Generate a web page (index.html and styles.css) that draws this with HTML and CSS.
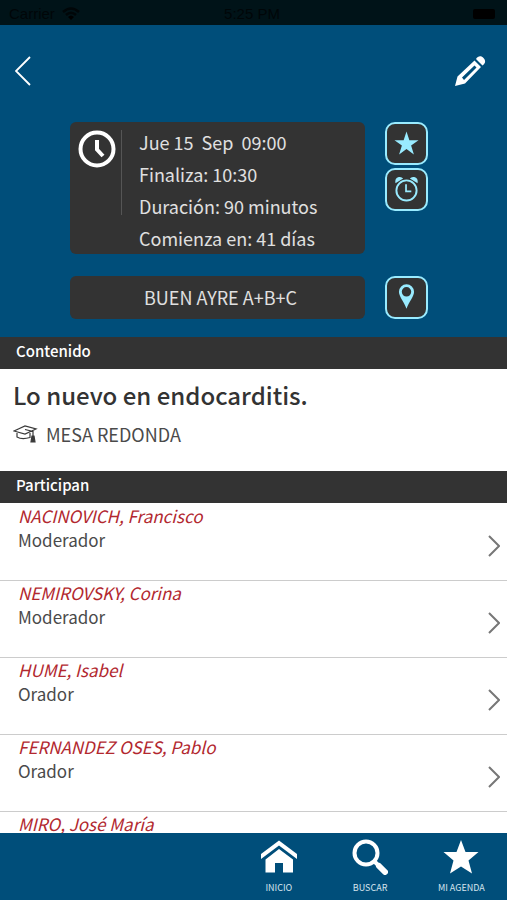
FILE: index.html
```html
<!DOCTYPE html>
<html lang="es">
<head>
  <meta charset="UTF-8" />
  <meta name="viewport" content="width=device-width, initial-scale=1" />
  <title>Lo nuevo en endocarditis.</title>
  <link rel="stylesheet" href="styles.css">
</head>
<body>

  <!-- Status bar -->
  <div class="status-bar">
    <span class="carrier">Carrier
      <svg width="18" height="14" viewBox="0 0 18 14"><path d="M1 5Q9-2 17 5M4 8Q9 3.500 14 8" fill="none" stroke="currentColor" stroke-width="2.500"/><path d="M6 10Q9 7 12 10L9 13Z"/></svg>
    </span>
    <span>5:25 PM</span>
    <span class="battery"></span>
  </div>

  <header class="hero">
    <nav class="toolbar">
      <button class="icon-button" aria-label="Volver">
        <svg width="16" height="30" viewBox="0 0 16 30"><path d="M15 1L1 15L15 29" fill="none" stroke="#fff" stroke-width="1.800"/></svg>
      </button>
      <button class="icon-button" aria-label="Editar nota">
        <svg width="32" height="32" viewBox="0 0 32 32" fill="#fff"><path d="M22 4C24 0.500 27.500 0.500 29.500 3C32 5.500 31.500 8.500 28.500 10.500Z"/><path fill-rule="evenodd" d="M20.500 5.500L27 12L11 28.500L1 31L3.500 21.500ZM20.500 10.500L8 22.500L10 25L22.500 12.500Z"/></svg>
      </button>
    </nav>

    <div class="info">
      <div class="card schedule">
        <svg class="clock" width="38" height="38" viewBox="0 0 38 38" fill="none" stroke="#fff" stroke-width="4"><circle cx="19" cy="19" r="16.500"/><path d="M19 10V19.500L25 26"/></svg>
        <ul class="times">
          <li>Jue 15  Sep  09:00</li>
          <li>Finaliza: 10:30</li>
          <li>Duración: 90 minutos</li>
          <li>Comienza en: 41 días</li>
        </ul>
      </div>
      <div class="actions">
        <button class="action" aria-label="Agregar a mi agenda">
          <svg width="25" height="25" viewBox="0 0 26 26"><path d="M13 0.500L16 9.500H25.500L17.800 15L20.700 24.500L13 18.700L5.300 24.500L8.200 15L0.500 9.500H10Z" fill="#99ebff"/></svg>
        </button>
        <button class="action" aria-label="Alarma">
          <svg width="25" height="29" viewBox="0 0 26 30" fill="none" stroke="#99ebff"><circle cx="13" cy="16" r="10.500" stroke-width="2"/><path d="M12.500 9.500V17H18" stroke-width="1.800"/><path d="M1.500 8.500Q0.500 3 5 2Q8 1.500 9.500 3.500ZM24.500 8.500Q25.500 3 21 2Q18 1.500 16.500 3.500Z" fill="#99ebff" stroke="none"/></svg>
        </button>
      </div>
      <div class="card room">BUEN AYRE A+B+C</div>
      <button class="action" aria-label="Ver ubicación">
        <svg width="17" height="29" viewBox="0 0 18 30"><path fill-rule="evenodd" d="M9 1A8 8 0 0 0 1 9C1 14 6 19 9 27C12 19 17 14 17 9A8 8 0 0 0 9 1ZM9 4A5 5 0 1 1 9 14A5 5 0 1 1 9 4Z" fill="#99ebff"/></svg>
      </button>
    </div>
  </header>

  <main>
    <h2 class="section-title">Contenido</h2>
    <section class="content">
      <h1>Lo nuevo en endocarditis.</h1>
      <p class="kind">
        <svg width="25" height="18" viewBox="0 0 25 18" fill="none" stroke="#3a3a3a" stroke-width="1.200"><path d="M1 6L12 1L23 4L12 9ZM4 8V12Q9 15 17 12.500V8M12 4.500L20 6.500V12"/><path d="M19 11H21L22 17H18Z" fill="#3a3a3a"/></svg>
        MESA REDONDA
      </p>
    </section>

    <h2 class="section-title">Participan</h2>
    <ul class="people">
      <li><a href="#"><span><em>NACINOVICH, Francisco</em>Moderador</span><svg class="chevron" width="12" height="22" viewBox="0 0 12 22"><path d="M1 1L11 11L1 21"/></svg></a></li>
      <li><a href="#"><span><em>NEMIROVSKY, Corina</em>Moderador</span><svg class="chevron" width="12" height="22" viewBox="0 0 12 22"><path d="M1 1L11 11L1 21"/></svg></a></li>
      <li><a href="#"><span><em>HUME, Isabel</em>Orador</span><svg class="chevron" width="12" height="22" viewBox="0 0 12 22"><path d="M1 1L11 11L1 21"/></svg></a></li>
      <li><a href="#"><span><em>FERNANDEZ OSES, Pablo</em>Orador</span><svg class="chevron" width="12" height="22" viewBox="0 0 12 22"><path d="M1 1L11 11L1 21"/></svg></a></li>
      <li><a href="#"><span><em>MIRO, José María</em></span></a></li>
    </ul>
  </main>

  <!-- Bottom tabs -->
  <nav class="tabs">
    <a href="#">
      <svg width="36" height="36" viewBox="0 0 36 36" fill="#fff"><path d="M18 1.500L36 15V20L18 6.500L0 20V15Z"/><path d="M18 10L32 20.500V33.500H22V24H14V33.500H4.500V20.500Z"/></svg>
      INICIO
    </a>
    <a href="#">
      <svg width="36" height="36" viewBox="0 0 36 36" fill="none" stroke="#fff"><circle cx="14" cy="14" r="11.500" stroke-width="4"/><path d="M22 22L26 26" stroke-width="4"/><path d="M27 27L33 33" stroke-width="6" stroke-linecap="round"/></svg>
      BUSCAR
    </a>
    <a href="#">
      <svg width="36" height="36" viewBox="0 0 36 36"><path d="M18 1L22.500 13H35.500L25.500 21.500L29 34.500L18 27.500L7 34.500L10.500 21.500L0.500 13H13.500Z" fill="#fff"/></svg>
      MI AGENDA
    </a>
  </nav>

</body>
</html>
```

FILE: styles.css
```css
* {
  box-sizing: border-box;
}

body {
  margin: 0;
  height: 100vh;
  display: flex;
  flex-direction: column;
  background: #fff;
  color: #4a4a4a;
  font-family: "Noto Sans CJK SC", "Noto Sans", sans-serif;
  font-size: 18px;
}

ul {
  list-style: none;
  margin: 0;
  padding: 0;
}

a {
  color: inherit;
  text-decoration: none;
}

button {
  padding: 0;
  border: none;
  background: none;
  cursor: pointer;
}

svg {
  display: block;
}

.status-bar {
  flex: none;
  display: grid;
  grid-template-columns: 1fr auto 1fr;
  align-items: center;
  height: 25px;
  padding: 2px 12px 0 9px;
  background: #001318;
  color: #000608;
  font-family: "Liberation Sans", sans-serif;
  font-size: 15px;
}

.carrier {
  display: flex;
  align-items: center;
  gap: 7px;
}

.battery {
  justify-self: end;
  width: 22px;
  height: 10px;
  border-radius: 2px;
  background: #000;
}

.hero {
  flex: none;
  padding-bottom: 18px;
  background: #004e7a;
}

.toolbar {
  display: flex;
  justify-content: space-between;
  align-items: center;
  height: 97px;
  padding: 0 21px 5px 15px;
}

.info {
  display: grid;
  grid-template-columns: 1fr 43px;
  gap: 22px 20px;
  padding: 0 79px 0 70px;
}

.card {
  border-radius: 6px;
  background: #333;
  color: #e0e0e0;
}

.schedule {
  display: flex;
  align-items: flex-start;
  height: 132px;
  padding: 8px;
}

.times {
  padding-left: 17px;
  margin-left: 5px;
  height: 85px;
  border-left: 1px solid #555;
  line-height: 32px;
}

.times li {
  white-space: pre;
}

.times li:first-child {
  margin-top: -4px;
}

.room {
  height: 43px;
  padding-left: 6px;
  line-height: 43px;
  text-align: center;
}

.actions {
  display: flex;
  flex-direction: column;
  gap: 3px;
}

.action {
  display: flex;
  justify-content: center;
  align-items: center;
  height: 43px;
  width: 43px;
  border: 2px solid #99ebff;
  border-radius: 10px;
  background: #333;
}

main {
  flex: 1;
  min-height: 0;
  overflow: hidden;
}

.section-title {
  margin: 0;
  padding: 0 16px 4px;
  background: #333;
  color: #fff;
  font-size: 15px;
  font-weight: 500;
  line-height: 28px;
}

.content {
  padding: 9px 13px 21px;
}

.content h1 {
  margin: 0;
  color: #333;
  font-size: 24px;
  font-weight: 500;
  line-height: 34px;
}

.kind {
  display: flex;
  align-items: center;
  gap: 8px;
  margin: 6px 0 0;
  line-height: 32px;
}

.people {
  padding-top: 1px;
}

.people a {
  display: flex;
  justify-content: space-between;
  height: 77px;
  padding: 0 7px 0 18px;
  border-bottom: 1px solid #ccc;
  font-size: 17px;
  line-height: 24px;
}

.people em {
  display: block;
  color: #b2282f;
}

.chevron {
  margin-top: 31px;
  fill: none;
  stroke: #777;
  stroke-width: 2;
}

.tabs {
  flex: none;
  display: flex;
  justify-content: flex-end;
  height: 67px;
  background: #004e7a;
  color: #d5e4ee;
  font-size: 9px;
  line-height: 14px;
}

.tabs a {
  display: flex;
  flex-direction: column;
  align-items: center;
  gap: 6px;
  width: 18%;
  padding-top: 6px;
}
```
